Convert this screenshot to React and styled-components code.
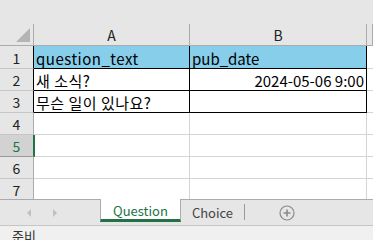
import React from "react";
import styled, { createGlobalStyle } from "styled-components";

const Global = createGlobalStyle`
  html, body { margin: 0; padding: 0; overflow: hidden; background: #e6e6e6; }
  body { font-family: "Noto Sans CJK KR", "Noto Sans", sans-serif; }
`;

const Page = styled.div`
  width: 373px;
  height: 240px;
  display: flex;
  flex-direction: column;
  background: #e6e6e6;
  overflow: hidden;
`;

const TopBand = styled.div`
  height: 24px;
  flex: none;
  background: #e6e6e6;
`;

const Sheet = styled.div`
  flex: none;
  height: 175px;
  display: grid;
  grid-template-columns: 34px 156px 177px 1fr;
  grid-template-rows: 22px 23px repeat(6, 22px);
  overflow: hidden;
  background: #fff;
`;

const Corner = styled.div`
  position: relative;
  background: #e6e6e6;
  border-right: 1px solid #ababab;
  border-bottom: 1px solid #ababab;
  &::after {
    content: "";
    position: absolute;
    right: 3px;
    bottom: 3px;
    width: 0;
    height: 0;
    border-left: 14px solid transparent;
    border-bottom: 14px solid #b4b4b4;
  }
`;

const ColHeader = styled.div`
  background: #e6e6e6;
  border-right: 1px solid #ababab;
  border-bottom: 1px solid #ababab;
  display: flex;
  align-items: center;
  justify-content: center;
  font-size: 14px;
  color: #222;
  padding-top: 1px;
`;

const RowHeader = styled.div`
  background: ${(p) => (p.$active ? "#d2d2d2" : "#e6e6e6")};
  border-right: ${(p) =>
    p.$active ? "2px solid #217346" : `1px solid ${p.$edge || "#ababab"}`};
  border-bottom: 1px solid ${(p) => (p.$active ? "#9a9a9a" : "#c6c6c6")};
  margin-right: ${(p) => (p.$active ? "-1px" : "0")};
  position: relative;
  z-index: ${(p) => (p.$active ? 1 : 0)};
  display: flex;
  align-items: center;
  justify-content: center;
  font-size: 14px;
  color: ${(p) => (p.$active ? "#217346" : "#222")};
  padding-top: 1px;
`;

const Cell = styled.div`
  background: ${(p) => p.$fill || "#fff"};
  border-right: 1px solid ${(p) => (p.$boxed ? "#000" : "#d4d4d4")};
  border-bottom: 1px solid ${(p) => (p.$boxed ? "#000" : "#d4d4d4")};
  display: flex;
  align-items: center;
  justify-content: ${(p) => (p.$right ? "flex-end" : "flex-start")};
  padding: 2px 2px 0 2px;
  font-size: 15px;
  letter-spacing: ${(p) => p.$track || 0}px;
  color: #000;
  white-space: nowrap;
  overflow: hidden;
`;

const Spare = styled.div`
  background: #fff;
  border-bottom: 1px solid #d4d4d4;
`;

const TabBar = styled.div`
  flex: none;
  height: 27px;
  box-sizing: border-box;
  border-top: 1px solid #ababab;
  border-bottom: 1px solid #c6c6c6;
  background: #e6e6e6;
  display: flex;
  align-items: stretch;
`;

const NavArea = styled.div`
  width: 100px;
  display: flex;
  align-items: center;
  gap: 22px;
  padding-left: 27px;
  box-sizing: border-box;
`;

const Arrow = styled.span`
  width: 0;
  height: 0;
  border-top: 4px solid transparent;
  border-bottom: 4px solid transparent;
  ${(p) =>
    p.$dir === "left"
      ? "border-right: 4px solid #c0c0c0;"
      : "border-left: 4px solid #c0c0c0;"}
`;

const Tab = styled.div`
  box-sizing: border-box;
  width: ${(p) => p.$w}px;
  display: flex;
  align-items: center;
  justify-content: center;
  font-size: 13px;
  background: ${(p) => (p.$active ? "#fff" : "transparent")};
  color: ${(p) => (p.$active ? "#217346" : "#444")};
  border-left: ${(p) => (p.$active ? "1px solid #ababab" : "none")};
  border-right: ${(p) => (p.$active ? "1px solid #ababab" : "none")};
  border-bottom: ${(p) => (p.$active ? "3px solid #217346" : "none")};
  margin-bottom: ${(p) => (p.$active ? "3px" : "0")};
  padding-top: ${(p) => (p.$active ? "3px" : "0")};
  margin-top: -1px;
`;

const Divider = styled.div`
  width: 1px;
  background: #9a9a9a;
  margin: 4px 0 5px 0;
`;

const AddButton = styled.div`
  width: 84px;
  display: flex;
  align-items: center;
  justify-content: center;
`;

const StatusBar = styled.div`
  flex: 1;
  background: #f0f0f0;
  font-size: 13px;
  color: #333;
  padding-left: 12px;
  line-height: 18px;
  padding-top: 1px;
`;

const rows = [
  { n: 1, a: "question_text", b: "pub_date", fill: "#87ceeb", boxed: true },
  { n: 2, a: "새 소식?", b: "2024-05-06 9:00", right: true, boxed: true },
  { n: 3, a: "무슨 일이 있나요?", b: "", boxed: true },
  { n: 4 },
  { n: 5, active: true },
  { n: 6 },
  { n: 7 },
];

export default function App() {
  return (
    <>
      <Global />
      <Page>
        <TopBand />
        <Sheet>
          <Corner />
          <ColHeader>A</ColHeader>
          <ColHeader>B</ColHeader>
          <ColHeader />
          {rows.map((r) => (
            <React.Fragment key={r.n}>
              <RowHeader $active={r.active} $edge={r.boxed ? "#000" : undefined}>
                {r.n}
              </RowHeader>
              <Cell $fill={r.fill} $boxed={r.boxed} $track={0.5}>{r.a}</Cell>
              <Cell $fill={r.fill} $boxed={r.boxed} $right={r.right}>{r.b}</Cell>
              <Spare />
            </React.Fragment>
          ))}
        </Sheet>
        <TabBar>
          <NavArea>
            <Arrow $dir="left" />
            <Arrow $dir="right" />
          </NavArea>
          <Tab $active $w={81}>Question</Tab>
          <Tab $w={63}>Choice</Tab>
          <Divider />
          <AddButton>
            <svg width="16" height="16" viewBox="0 0 16 16">
              <circle cx="8" cy="8" r="7" fill="none" stroke="#8a8a8a" strokeWidth="1.2" />
              <path d="M8 4.5v7M4.5 8h7" stroke="#8a8a8a" strokeWidth="1.6" />
            </svg>
          </AddButton>
        </TabBar>
        <StatusBar>준비</StatusBar>
      </Page>
    </>
  );
}
